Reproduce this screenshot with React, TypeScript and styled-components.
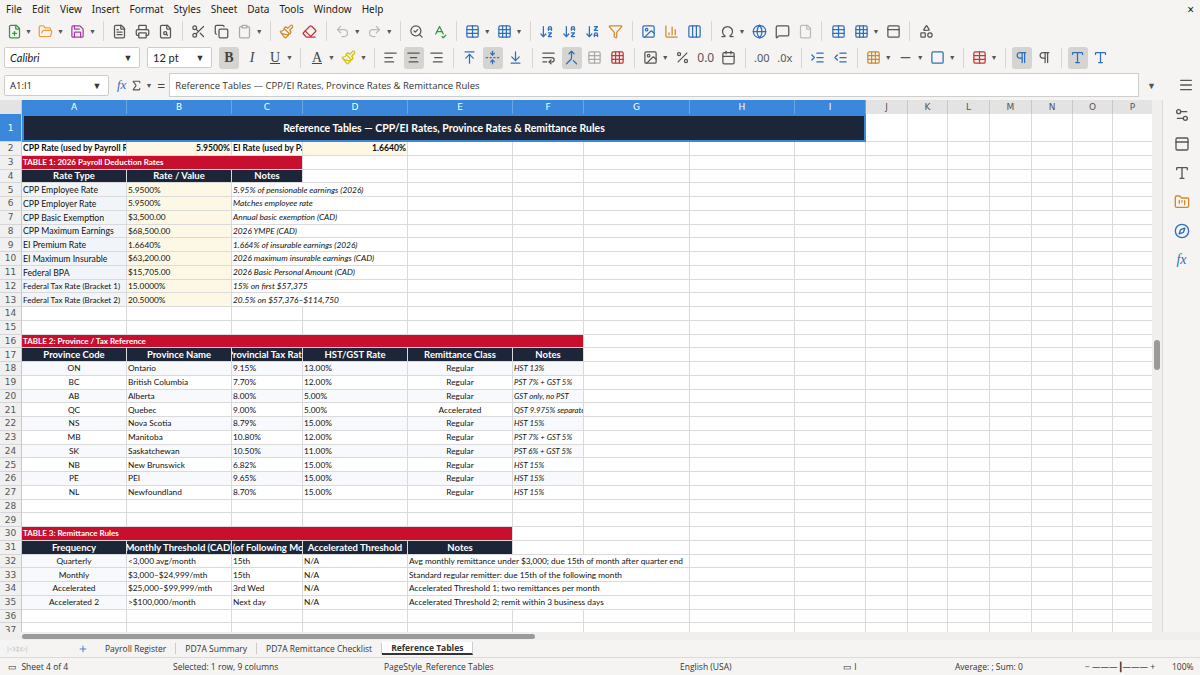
import React from "react";
import styled, { createGlobalStyle } from "styled-components";
import {
  FilePlus, FolderOpen, Save, FileText, Printer, FileSearch, Scissors, Copy, Clipboard, Paintbrush, Eraser,
  Undo2, Redo2, SearchCheck, SpellCheck, Table, Grid3x3, ArrowDownAZ, ArrowDownZA, Filter, Image, BarChart3,
  Omega, Globe, MessageSquare, File, Columns3, PanelTop, Shapes, AlignLeft, AlignCenter, AlignRight,
  ArrowUpToLine, FoldVertical, ArrowDownToLine, WrapText, Merge, Percent, Calendar, IndentIncrease, IndentDecrease,
  Square, Minus, Pilcrow, Menu, Settings2, Type, FolderKanban, Compass, Plus, Sigma
} from "lucide-react";

const Global = createGlobalStyle`
  html,body{margin:0;padding:0;background:#f5f4f2;}
  body{font-family:"Noto Sans","Open Sans",sans-serif;overflow:hidden;}
`;

const Page = styled.div`width:1200px;height:675px;display:flex;flex-direction:column;background:#f5f4f2;overflow:hidden;`;
const MenuBar = styled.div`height:18px;display:flex;align-items:center;padding:0 6px;font-size:10px;color:#222;`;
const MenuItem = styled.span`margin-right:10px;`;
const Close = styled.span`margin-left:auto;font-size:12px;`;
const ToolRow = styled.div<{ $h: number }>`height:${p => p.$h}px;display:flex;align-items:center;padding:0 4px;gap:3px;color:#555;`;
const Ico = styled.span<{ $c?: string; $on?: boolean }>`
  width:20px;height:22px;display:inline-flex;align-items:center;justify-content:center;color:${p => p.$c || "#555"};
  background:${p => (p.$on ? "#d6d4d0" : "transparent")};border-radius:3px;font-size:13px;
`;
const Drop = styled.span`font-size:7px;color:#555;margin:0 1px 0 -2px;`;
const Sep = styled.span`width:1px;height:20px;background:#d8d6d2;margin:0 3px;`;
const Combo = styled.div<{ $w: number; $i?: boolean }>`
  width:${p => p.$w}px;height:21px;display:flex;align-items:center;background:#fff;border:1px solid #cfcdc9;border-radius:2px;
  font-family:"Lato",sans-serif;font-style:${p => (p.$i ? "italic" : "normal")};font-size:11px;color:#222;padding-left:5px;box-sizing:border-box;margin-right:4px;
`;
const ComboText = styled.span`flex:1;`;
const ComboBtn = styled.span`width:22px;display:flex;justify-content:center;font-size:9px;color:#333;`;
const Letter = styled.span<{ $b?: boolean; $i?: boolean; $u?: boolean }>`
  font-family:"Liberation Serif",serif;font-size:14px;font-weight:${p => (p.$b ? 700 : 400)};
  font-style:${p => (p.$i ? "italic" : "normal")};text-decoration:${p => (p.$u ? "underline" : "none")};color:#444;
`;
const FormulaRow = styled.div`height:28px;display:flex;align-items:center;padding:0 4px;gap:4px;`;
const Input = styled.div`flex:1;height:22px;background:#fff;border:1px solid #cfcdc9;display:flex;align-items:center;padding-left:5px;font-size:9.5px;font-family:"Open Sans",sans-serif;color:#333;`;
const Body = styled.div`flex:1;display:flex;min-height:0;margin-top:1px;`;
const SheetArea = styled.div`width:1153px;display:flex;flex-direction:column;background:#fff;overflow:hidden;`;
const VScroll = styled.div`width:10px;background:#f0efed;position:relative;`;
const VThumb = styled.div`position:absolute;left:2px;top:240px;width:6px;height:30px;background:#9a9a9a;border-radius:3px;`;
const Side = styled.div`width:37px;display:flex;flex-direction:column;align-items:center;gap:13px;padding-top:7px;color:#555;border-left:1px solid #dcdad6;`;

const COLS = "22px 105px 105px 71px 105px 105px 71px 106px 105px 71px 42px 40px 42px 42px 41px 40px 40px";
const GridRow = styled.div<{ $h: number }>`display:grid;grid-template-columns:${COLS};height:${p => p.$h}px;flex:none;`;
const ColHead = styled.div<{ $sel?: boolean }>`
  background:${p => (p.$sel ? "#3a87dc" : "#e3e3e3")};color:${p => (p.$sel ? "#fff" : "#555")};
  font-family:"DejaVu Sans",sans-serif;font-size:9px;display:flex;align-items:center;justify-content:center;border-right:1px solid ${p => (p.$sel ? "#6aa5e6" : "#c8c8c8")};
`;
const RowHead = styled.div<{ $sel?: boolean }>`
  background:${p => (p.$sel ? "#3a87dc" : "#f0f0f0")};color:${p => (p.$sel ? "#fff" : "#555")};
  font-family:"DejaVu Sans",sans-serif;font-size:9px;display:flex;align-items:center;justify-content:center;border-bottom:1px solid #d6d6d6;border-right:1px solid #c8c8c8;
`;
const Cell = styled.div<{ $span: number; $bg?: string; $fg?: string; $b?: boolean; $i?: boolean; $al?: string; $fs?: number }>`
  grid-column:span ${p => p.$span};background:${p => p.$bg || "#fff"};color:${p => p.$fg || "#111"};
  font-family:"Lato","Open Sans",sans-serif;font-size:${p => p.$fs || 8.3}px;font-weight:${p => (p.$b ? 700 : 400)};font-style:${p => (p.$i ? "italic" : "normal")};
  display:flex;align-items:center;justify-content:${p => (p.$al === "c" ? "center" : p.$al === "r" ? "flex-end" : "flex-start")};
  padding:0 1px;white-space:nowrap;overflow:hidden;box-sizing:border-box;
  border-right:1px solid #dadada;border-bottom:1px solid #dadada;
`;
const Title = styled(Cell)`border:2px solid #3a87dc;`;

const NAVY = "#1d2638", RED = "#c8102e", CREAM = "#fdf8e6", BLUE = "#f1f5fa";
type C = { t?: string; s?: number; bg?: string; fg?: string; b?: boolean; i?: boolean; al?: string; fs?: number };
const hdr = (t: string, s = 1): C => ({ t, s, bg: NAVY, fg: "#fff", b: true, al: "c", fs: 9.5 });
const sec = (t: string, s: number): C => ({ t, s, bg: RED, fg: "#fff", b: true, fs: 8 });

const t1: [string, string, string][] = [
  ["CPP Employee Rate", "5.9500%", "5.95% of pensionable earnings (2026)"],
  ["CPP Employer Rate", "5.9500%", "Matches employee rate"],
  ["CPP Basic Exemption", "$3,500.00", "Annual basic exemption (CAD)"],
  ["CPP Maximum Earnings", "$68,500.00", "2026 YMPE (CAD)"],
  ["EI Premium Rate", "1.6640%", "1.664% of insurable earnings (2026)"],
  ["EI Maximum Insurable", "$63,200.00", "2026 maximum insurable earnings (CAD)"],
  ["Federal BPA", "$15,705.00", "2026 Basic Personal Amount (CAD)"],
  ["Federal Tax Rate (Bracket 1)", "15.0000%", "15% on first $57,375"],
  ["Federal Tax Rate (Bracket 2)", "20.5000%", "20.5% on $57,376–$114,750"],
];
const t2 = [
  ["ON", "Ontario", "9.15%", "13.00%", "Regular", "HST 13%"],
  ["BC", "British Columbia", "7.70%", "12.00%", "Regular", "PST 7% + GST 5%"],
  ["AB", "Alberta", "8.00%", "5.00%", "Regular", "GST only, no PST"],
  ["QC", "Quebec", "9.00%", "5.00%", "Accelerated", "QST 9.975% separate"],
  ["NS", "Nova Scotia", "8.79%", "15.00%", "Regular", "HST 15%"],
  ["MB", "Manitoba", "10.80%", "12.00%", "Regular", "PST 7% + GST 5%"],
  ["SK", "Saskatchewan", "10.50%", "11.00%", "Regular", "PST 6% + GST 5%"],
  ["NB", "New Brunswick", "6.82%", "15.00%", "Regular", "HST 15%"],
  ["PE", "PEI", "9.65%", "15.00%", "Regular", "HST 15%"],
  ["NL", "Newfoundland", "8.70%", "15.00%", "Regular", "HST 15%"],
];
const t3 = [
  ["Quarterly", "<3,000 avg/month", "15th", "N/A", "Avg monthly remittance under $3,000; due 15th of month after quarter end"],
  ["Monthly", "$3,000–$24,999/mth", "15th", "N/A", "Standard regular remitter: due 15th of the following month"],
  ["Accelerated", "$25,000–$99,999/mth", "3rd Wed", "N/A", "Accelerated Threshold 1; two remittances per month"],
  ["Accelerated 2", ">$100,000/month", "Next day", "N/A", "Accelerated Threshold 2; remit within 3 business days"],
];

const rows: C[][] = [];
rows.push([{ t: "CPP Rate (used by Payroll Register)", b: true, fs: 8.6 }, { t: "5.9500%", bg: CREAM, b: true, al: "r", fs: 8.6 }, { t: "EI Rate (used by Payroll)", b: true, fs: 8.6 }, { t: "1.6640%", bg: CREAM, b: true, al: "r", fs: 8.6 }]);
rows.push([sec("TABLE 1: 2026 Payroll Deduction Rates", 3)]);
rows.push([hdr("Rate Type"), hdr("Rate / Value"), hdr("Notes")]);
t1.forEach(r => rows.push([{ t: r[0], bg: BLUE, fs: r[0].startsWith("Federal Tax") ? 8 : 8.7 }, { t: r[1], bg: CREAM }, { t: r[2], i: true, s: 2 }]));
rows.push([], []);
rows.push([sec("TABLE 2: Province / Tax Reference", 6)]);
rows.push([hdr("Province Code"), hdr("Province Name"), hdr("Provincial Tax Rate"), hdr("HST/GST Rate"), hdr("Remittance Class"), hdr("Notes")]);
t2.forEach((r, k) => { const bg = k % 2 ? "#fff" : "#f7f9fc"; rows.push([{ t: r[0], al: "c", bg }, { t: r[1], bg }, { t: r[2], bg }, { t: r[3], bg }, { t: r[4], al: "c", bg }, { t: r[5], i: true, bg, fs: 7.8 }]); });
rows.push([], []);
rows.push([sec("TABLE 3: Remittance Rules", 5)]);
rows.push([hdr("Frequency"), hdr("Monthly Threshold (CAD)"), hdr("Day (of Following Month)"), hdr("Accelerated Threshold"), hdr("Notes")]);
t3.forEach(r => rows.push([{ t: r[0], al: "c", bg: "#f7f9fc" }, { t: r[1] }, { t: r[2] }, { t: r[3] }, { t: r[4], s: 3 }]));
rows.push([], []);

const letters = "ABCDEFGHIJKLMNOP".split("");

function SheetRow({ n, cells }: { n: number; cells: C[] }) {
  const out: React.ReactNode[] = [];
  let used = 0;
  cells.forEach((c, k) => {
    const s = c.s || 1;
    used += s;
    out.push(<Cell key={k} $span={s} $bg={c.bg} $fg={c.fg} $b={c.b} $i={c.i} $al={c.al} $fs={c.fs}>{c.t}</Cell>);
  });
  for (let k = used; k < 16; k++) out.push(<Cell key={"e" + k} $span={1} />);
  return <GridRow $h={13.76}><RowHead>{n}</RowHead>{out}</GridRow>;
}

const Tabs = styled.div`height:17px;display:flex;align-items:center;font-size:8.5px;color:#333;font-family:"Open Sans",sans-serif;`;
const TabNav = styled.span`width:78px;color:#bbb;padding-left:6px;font-size:7px;letter-spacing:-1px;box-sizing:border-box;`;
const Tab = styled.span<{ $on?: boolean }>`padding:0 9px;border-right:1px solid #ccc;font-weight:${p => (p.$on ? 700 : 400)};${p => p.$on ? "border-bottom:2px solid #333;background:#fff;" : ""}`;
const HScroll = styled.div`height:8px;background:#f0efed;position:relative;`;
const HThumb = styled.div`position:absolute;left:22px;top:2px;width:513px;height:5px;background:#9a9a9a;border-radius:3px;`;
const Status = styled.div`height:17px;display:flex;align-items:center;font-size:8.5px;color:#333;font-family:"Open Sans",sans-serif;border-top:1px solid #dcdad6;`;
const St = styled.span<{ $w: number }>`width:${p => p.$w}px;flex:none;`;

const I = ({ c, on, children, d }: { c?: string; on?: boolean; children: React.ReactNode; d?: boolean }) => (
  <><Ico $c={c} $on={on}>{children}</Ico>{d && <Drop>▼</Drop>}</>
);
const sz = 15;

export default function App() {
  return (
    <Page>
      <Global />
      <MenuBar>
        {["File", "Edit", "View", "Insert", "Format", "Styles", "Sheet", "Data", "Tools", "Window", "Help"].map(m => <MenuItem key={m}>{m}</MenuItem>)}
        <Close>×</Close>
      </MenuBar>
      <ToolRow $h={26}>
        <I c="#2e9b3f" d><FilePlus size={sz} /></I><I c="#e9a23b" d><FolderOpen size={sz} /></I><I c="#a33ba8" d><Save size={sz} /></I><Sep />
        <I c="#555"><FileText size={sz} /></I><I><Printer size={sz} /></I><I><FileSearch size={sz} /></I><Sep />
        <I><Scissors size={sz} /></I><I><Copy size={sz} /></I><I c="#aaa" d><Clipboard size={sz} /></I><Sep />
        <I c="#d08a2a"><Paintbrush size={sz} /></I><I c="#c33"><Eraser size={sz} /></I><Sep />
        <I c="#bbb" d><Undo2 size={sz} /></I><I c="#bbb" d><Redo2 size={sz} /></I><Sep />
        <I><SearchCheck size={sz} /></I><I c="#2e9b3f"><SpellCheck size={sz} /></I><Sep />
        <I c="#2c6fbe" d><Table size={sz} /></I><I c="#2c6fbe" d><Grid3x3 size={sz} /></I><Sep />
        <I c="#2c6fbe"><ArrowDownAZ size={sz} /></I><I c="#2c6fbe"><ArrowDownAZ size={sz} /></I><I c="#2c6fbe"><ArrowDownZA size={sz} /></I><I c="#d08a2a"><Filter size={sz} /></I><Sep />
        <I c="#2c6fbe"><Image size={sz} /></I><I c="#d08a2a"><BarChart3 size={sz} /></I><I c="#2c6fbe"><Columns3 size={sz} /></I><Sep />
        <I d><Omega size={sz} /></I><I c="#2c6fbe"><Globe size={sz} /></I><I><MessageSquare size={sz} /></I><I c="#bbb"><File size={sz} /></I><Sep />
        <I c="#2c6fbe"><Table size={sz} /></I><I c="#2c6fbe" d><Grid3x3 size={sz} /></I><I><PanelTop size={sz} /></I><Sep /><I><Shapes size={sz} /></I>
      </ToolRow>
      <ToolRow $h={27}>
        <Combo $w={136} $i><ComboText>Calibri</ComboText><ComboBtn>▼</ComboBtn></Combo>
        <Combo $w={65}><ComboText>12 pt</ComboText><ComboBtn>▼</ComboBtn></Combo>
        <I on><Letter $b>B</Letter></I><I><Letter $i>I</Letter></I><I d><Letter $u>U</Letter></I><Sep />
        <I c="#c33" d><Letter $u>A</Letter></I><I c="#d4c000" d><Paintbrush size={sz} /></I><Sep />
        <I><AlignLeft size={sz} /></I><I on><AlignCenter size={sz} /></I><I><AlignRight size={sz} /></I><Sep />
        <I c="#2c6fbe"><ArrowUpToLine size={sz} /></I><I c="#2c6fbe" on><FoldVertical size={sz} /></I><I c="#2c6fbe"><ArrowDownToLine size={sz} /></I><Sep />
        <I><WrapText size={sz} /></I><I on c="#2c6fbe"><Merge size={sz} /></I><I c="#aaa"><Table size={sz} /></I><I c="#c33"><Grid3x3 size={sz} /></I><Sep />
        <I d><Image size={sz} /></I><I><Percent size={sz} /></I><I><span style={{ fontSize: 12 }}>0.0</span></I><I><Calendar size={sz} /></I><Sep />
        <I><span style={{ fontSize: 11 }}>.00</span></I><I><span style={{ fontSize: 11 }}>.0x</span></I><Sep />
        <I c="#2c6fbe"><IndentIncrease size={sz} /></I><I c="#2c6fbe"><IndentDecrease size={sz} /></I><Sep />
        <I c="#d08a2a" d><Grid3x3 size={sz} /></I><I d><Minus size={sz} /></I><I c="#2c6fbe" d><Square size={sz} /></I><Sep />
        <I c="#c33" d><Table size={sz} /></I><Sep /><I on c="#2c6fbe"><Pilcrow size={sz} /></I><I><Pilcrow size={sz} /></I><Sep />
        <I on c="#2c6fbe"><Type size={sz} /></I><I c="#2c6fbe"><Type size={sz} /></I>
      </ToolRow>
      <FormulaRow>
        <Combo $w={105}><ComboText style={{ fontFamily: "Open Sans", fontSize: 9.5 }}>A1:I1</ComboText><ComboBtn>▼</ComboBtn></Combo>
        <Letter $i style={{ color: "#2c6fbe", fontSize: 13 }}>fx</Letter><Sigma size={13} color="#555" /><Drop>▼</Drop><span style={{ fontSize: 14, color: "#444" }}>=</span>
        <Input>Reference Tables — CPP/EI Rates, Province Rates &amp; Remittance Rules</Input>
        <Drop style={{ fontSize: 9, margin: "0 6px 0 4px" }}>▼</Drop>
        <Ico style={{ marginLeft: 10 }}><Menu size={16} /></Ico>
      </FormulaRow>
      <Body>
        <SheetArea>
          <GridRow $h={14}>
            <ColHead />
            {letters.map((l, k) => <ColHead key={l} $sel={k < 9}>{l}</ColHead>)}
          </GridRow>
          <GridRow $h={28}>
            <RowHead $sel>1</RowHead>
            <Title $span={9} $bg={NAVY} $fg="#fff" $b $al="c" $fs={10.5}>Reference Tables — CPP/EI Rates, Province Rates &amp; Remittance Rules</Title>
            {letters.slice(9).map(l => <Cell key={l} $span={1} />)}
          </GridRow>
          {rows.map((r, k) => <SheetRow key={k} n={k + 2} cells={r} />)}
          <SheetRow n={37} cells={[]} />
        </SheetArea>
        <VScroll><VThumb /></VScroll>
        <Side>
          <Settings2 size={16} /><PanelTop size={16} /><Type size={16} /><FolderKanban size={16} color="#d08a2a" /><Compass size={16} color="#2c6fbe" />
          <Letter $i style={{ color: "#2c6fbe" }}>fx</Letter>
        </Side>
      </Body>
      <HScroll><HThumb /></HScroll>
      <Tabs>
        <TabNav>|◁◁▷▷|</TabNav>
        <Plus size={10} color="#2c6fbe" style={{ marginRight: 8 }} />
        <Tab>Payroll Register</Tab><Tab>PD7A Summary</Tab><Tab>PD7A Remittance Checklist</Tab><Tab $on>Reference Tables</Tab>
      </Tabs>
      <Status>
        <St $w={173} style={{ paddingLeft: 8, boxSizing: "border-box" }}>▭ &nbsp;Sheet 4 of 4</St>
        <St $w={211}>Selected: 1 row, 9 columns</St>
        <St $w={296}>PageStyle_Reference Tables</St>
        <St $w={163}>English (USA)</St>
        <St $w={112}>▭ I</St>
        <St $w={130}>Average: ; Sum: 0</St>
        <St $w={87}>− ———┃——— +</St>
        <St $w={28}>100%</St>
      </Status>
    </Page>
  );
}
